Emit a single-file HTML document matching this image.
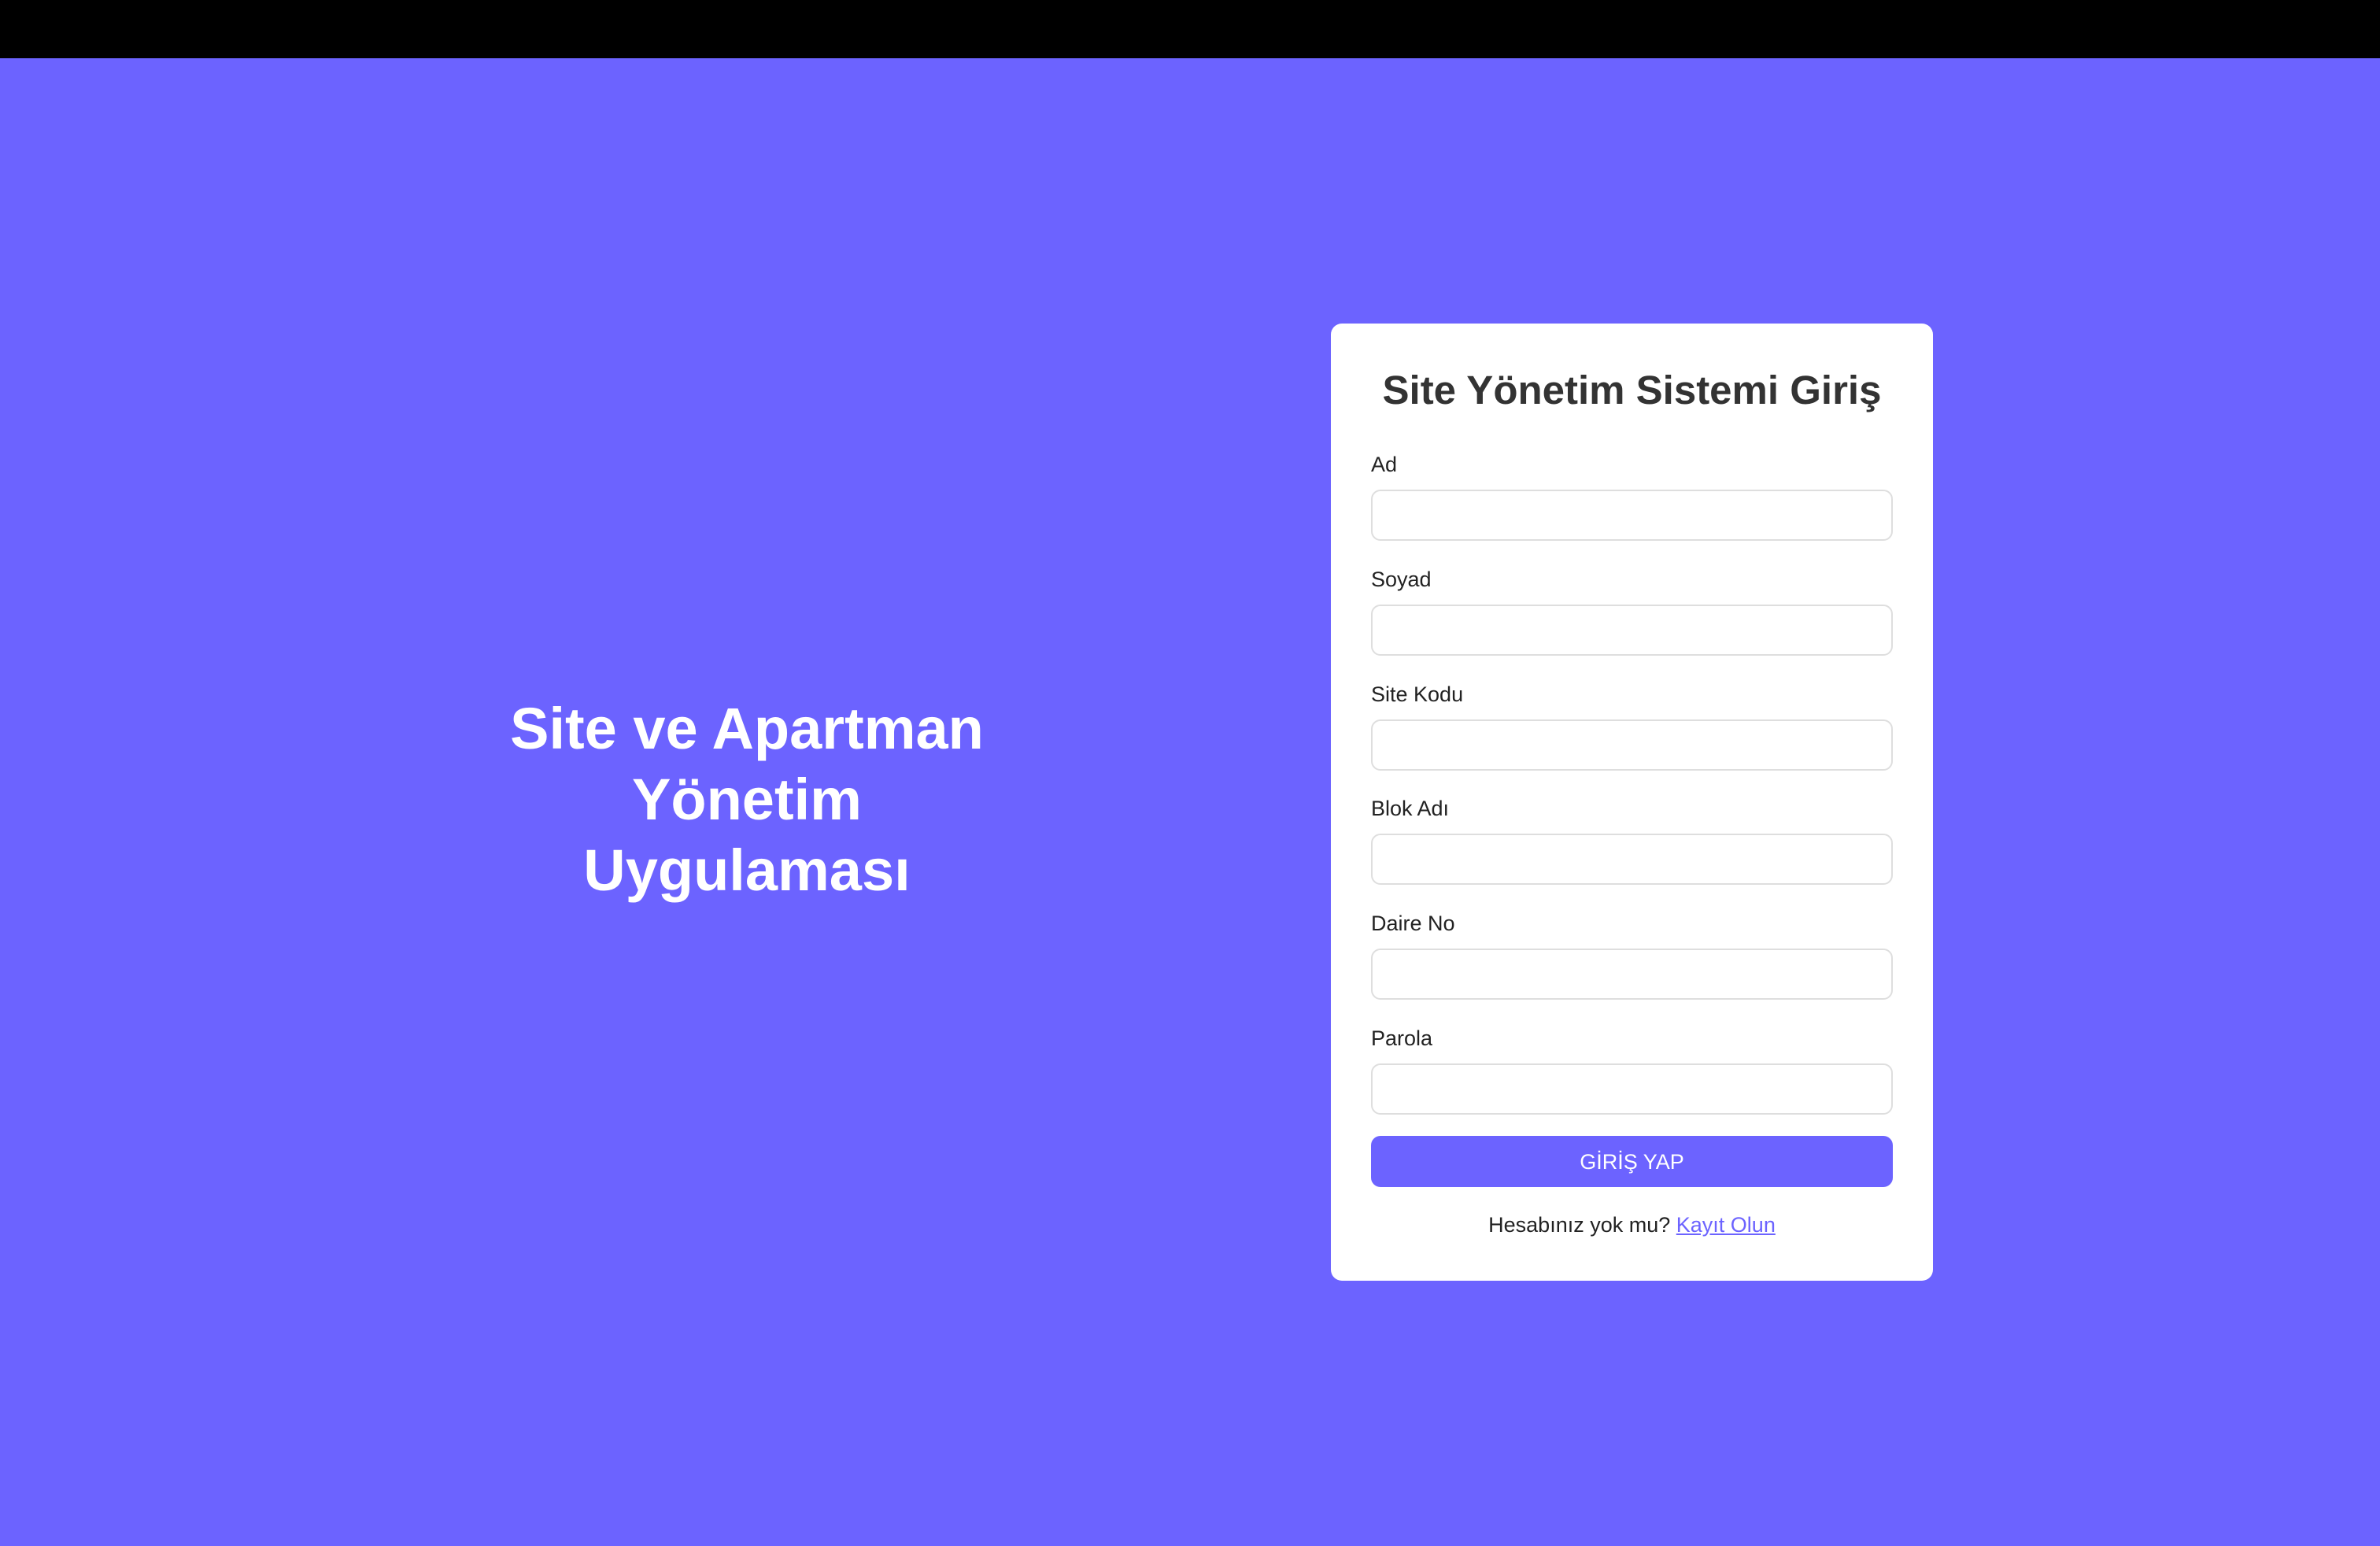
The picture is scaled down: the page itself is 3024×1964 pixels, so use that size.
<!DOCTYPE html>
<html><head><meta charset="utf-8"><style>
*{margin:0;padding:0;box-sizing:border-box}
html,body{width:3024px;height:1964px;overflow:hidden}
body{background:#6c63ff;font-family:"Liberation Sans",Arial,sans-serif;position:relative}
.top{position:absolute;left:0;top:0;width:3024px;height:74px;background:#000}
.hero{position:absolute;left:549px;width:800px;top:881px;text-align:center;color:#fff;font-weight:bold;font-size:74px;line-height:90px}
.card{position:absolute;left:1691px;top:411px;width:765px;height:1216px;background:#fff;border-radius:14px}
h1{position:absolute;left:0;width:765px;top:466px;text-align:center;font-size:51px;color:#333;font-weight:bold;line-height:60px}
.lab{position:absolute;left:1742px;font-size:27px;color:#222;line-height:32px}
.inp{position:absolute;left:1742px;width:663px;height:65px;border:2px solid #dedede;border-radius:12px;background:#fff}
.btn{position:absolute;left:1742px;top:1443px;width:663px;height:65px;background:#6c63ff;border-radius:12px;color:#fff;font-size:27px;text-align:center;line-height:67px}
.foot{position:absolute;left:1691px;width:765px;top:1540px;text-align:center;font-size:27px;color:#222;line-height:32px}
.foot a{color:#6c63ff;text-decoration:underline}
</style></head><body>
<div class="top"></div>
<div class="hero">Site ve Apartman<br>Yönetim<br>Uygulaması</div>
<div class="card"></div>
<h1 style="left:1691px">Site Yönetim Sistemi Giriş</h1>
<div class="lab" style="top:574px">Ad</div><div class="inp" style="top:622px"></div>
<div class="lab" style="top:720px">Soyad</div><div class="inp" style="top:768px"></div>
<div class="lab" style="top:866px">Site Kodu</div><div class="inp" style="top:914px"></div>
<div class="lab" style="top:1011px">Blok Adı</div><div class="inp" style="top:1059px"></div>
<div class="lab" style="top:1157px">Daire No</div><div class="inp" style="top:1205px"></div>
<div class="lab" style="top:1303px">Parola</div><div class="inp" style="top:1351px"></div>
<div class="btn">GİRİŞ YAP</div>
<div class="foot">Hesabınız yok mu? <a>Kayıt Olun</a></div>
</body></html>
